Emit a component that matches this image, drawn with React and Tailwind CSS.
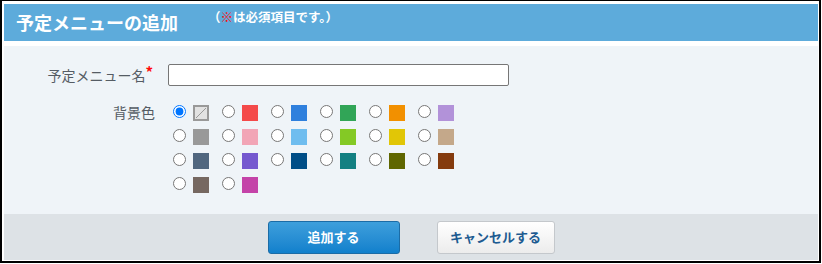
import React, { useState } from "react";

const swatches = [
  ["none", "#f44a4a", "#2f80dd", "#31a557", "#f29000", "#b292d9"],
  ["#999999", "#f2a5b6", "#6fbdef", "#84c925", "#e1c606", "#c4a88a"],
  ["#51677f", "#7559cf", "#004e87", "#138082", "#5f6600", "#843b0e"],
  ["#766861", "#c443a8"],
];

const App = () => {
  const [color, setColor] = useState("none");
  const [name, setName] = useState("");

  return (
    <div
      className="w-[821px] h-[263px] bg-white border-black border-t border-x-2 border-b-2 pt-[3px] pl-[2px] pr-[1px] pb-[1px] flex flex-col"
      style={{ fontFamily: '"Noto Sans CJK JP", "Noto Sans", sans-serif' }}
    >
      {/* header */}
      <div className="h-[37px] bg-[#5dabdb] flex items-start pl-[12px] text-white font-bold">
        <h1 className="text-[18px] leading-[37px]">予定メニューの追加</h1>
        <span className="ml-[30px] mt-[5px] text-[12.5px] leading-[16px]">
          （<span className="text-[#ff0a0a]">※</span>は必須項目です。）
        </span>
      </div>

      {/* form */}
      <div className="mt-[5px] h-[168px] bg-[#eff4f8] pt-[18px] text-[14px] text-[#555c64]">
        <div className="flex items-center h-[22px]">
          <label htmlFor="menuName" className="w-[151px] text-right pr-[2px]">
            予定メニュー名<span className="text-[#ff0a0a] text-[15px] font-bold align-top leading-[14px]">*</span>
          </label>
          <input
            id="menuName"
            type="text"
            value={name}
            onChange={(e) => setName(e.target.value)}
            className="ml-[13px] w-[341px] h-[22px] bg-white border border-[#767676] rounded-[2px] px-1 outline-none"
          />
        </div>

        <div className="flex mt-[19px]">
          <div className="w-[151px] text-right -mt-[3px] leading-[20px]">背景色</div>
          <div className="ml-[13px] flex flex-col">
            {swatches.map((row, i) => (
              <div key={i} className="flex h-[24px]">
                {row.map((c) => (
                  <label key={c} className="w-[49px] flex items-start cursor-pointer">
                    <input
                      type="radio"
                      name="bgColor"
                      checked={color === c}
                      onChange={() => setColor(c)}
                      className="m-0 ml-[5px] w-[13px] h-[13px]"
                    />
                    {c === "none" ? (
                      <span className="ml-[7px] w-[16px] h-[16px] border-2 border-[#999] bg-[#e2e2e2] flex">
                        <svg viewBox="0 0 12 12" className="w-full h-full">
                          <line x1="11" y1="1" x2="1" y2="11" stroke="#999" strokeWidth="1" />
                        </svg>
                      </span>
                    ) : (
                      <span className="ml-[7px] w-[16px] h-[16px]" style={{ backgroundColor: c }} />
                    )}
                  </label>
                ))}
              </div>
            ))}
          </div>
        </div>
      </div>

      {/* footer */}
      <div className="h-[46px] bg-[#dde2e6] flex items-center justify-center gap-[37px] text-[13px] font-bold">
        <button className="w-[132px] h-[33px] rounded-[3px] border border-[#1b6ca6] bg-gradient-to-b from-[#3d9fdc] to-[#1080cc] text-white">
          追加する
        </button>
        <button className="w-[118px] h-[33px] rounded-[3px] border border-[#c4c8cc] bg-gradient-to-b from-white to-[#ececec] text-[#1d5b91]">
          キャンセルする
        </button>
      </div>
    </div>
  );
};

export default App;
